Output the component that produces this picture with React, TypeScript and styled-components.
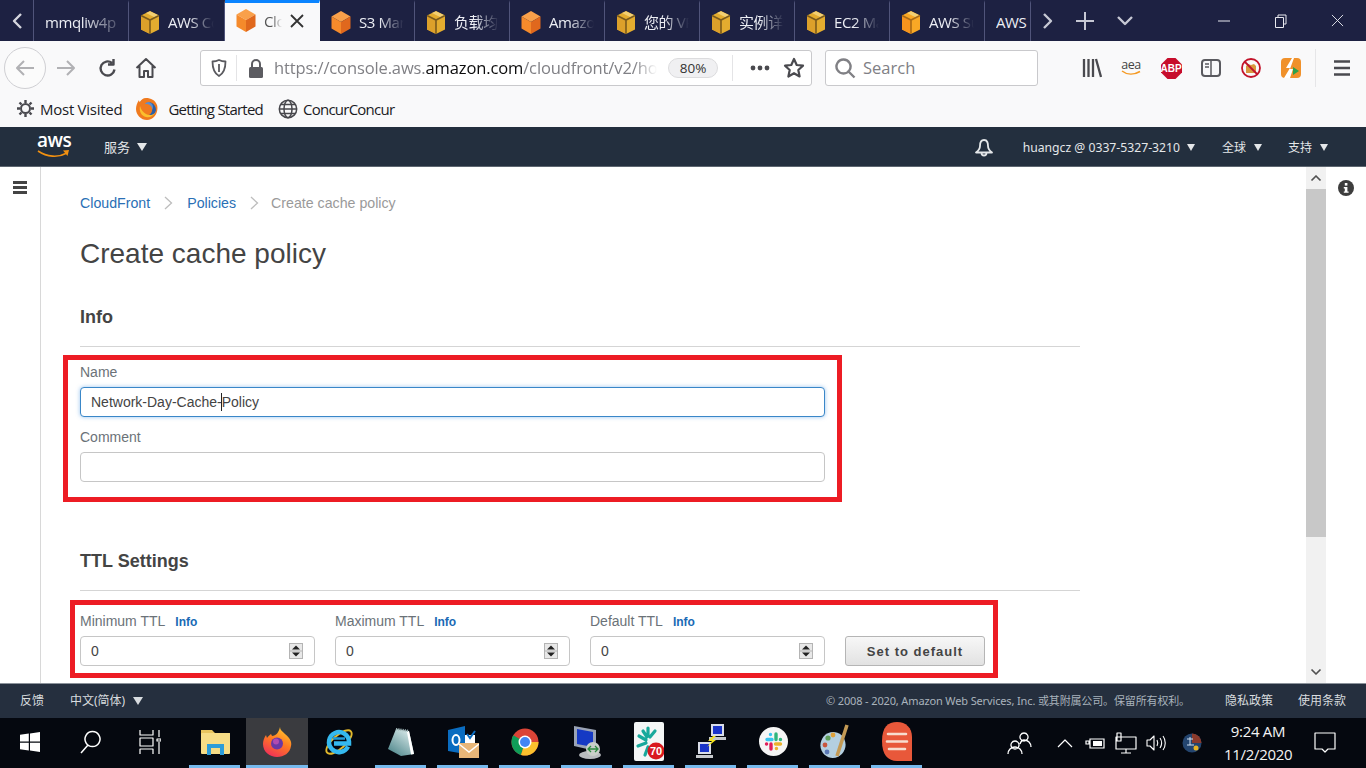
import React from "react";
import styled, { createGlobalStyle } from "styled-components";

const Global = createGlobalStyle`
  html, body { margin: 0; padding: 0; background: #fff; overflow: hidden; }
  * { box-sizing: border-box; }
`;
const UI = `"Open Sans", "Noto Sans CJK SC", sans-serif`;
const WEB = `"Liberation Sans", "Noto Sans CJK SC", sans-serif`;
const CJK = `"Noto Sans", "Noto Sans CJK SC", sans-serif`;

const Page = styled.div`
  width: 1366px; height: 768px; display: flex; flex-direction: column; overflow: hidden;
  font-family: ${WEB};
`;

/* ---------- browser tab strip ---------- */
const TabStrip = styled.div`
  height: 41px; flex: none; display: flex; align-items: stretch; background: #1d2142; color: #f2f2f6;
`;
const StripButton = styled.div<{ $w: number; $line?: boolean }>`
  width: ${p => p.$w}px; flex: none; display: flex; align-items: center; justify-content: center;
  ${p => p.$line ? "border-right: 1px solid #50547a;" : ""}
`;
const Tab = styled.div<{ $active?: boolean; $w?: number; $solo?: boolean }>`
  width: ${p => p.$w ?? 95}px; flex: none; display: flex; align-items: center; gap: 8px;
  padding-left: 11px; padding-right: ${p => p.$solo ? 0 : p.$active ? 15 : 10}px; position: relative;
  font: 15px/20px ${UI}; letter-spacing: -0.4px;
  background: ${p => p.$active ? "#f9f9fa" : "transparent"};
  color: ${p => p.$active ? "#555" : "#eceef4"};
  border-right: 1px solid ${p => p.$active ? "#f9f9fa" : "#50547a"};
  border-top: 3px solid ${p => p.$active ? "#0a84ff" : "transparent"};
  padding-bottom: ${p => p.$active ? 3 : 0}px;
`;
const TabText = styled.span<{ $fade?: boolean }>`
  flex: 1; min-width: 0; overflow: hidden; white-space: nowrap;
  ${p => p.$fade === false ? "" : "mask-image: linear-gradient(90deg, #000 45%, transparent 100%);"}
`;
const WindowControls = styled.div`
  margin-left: auto; display: flex;
`;
const WindowButton = styled.div`
  width: 57px; display: flex; align-items: center; justify-content: center;
`;

/* ---------- browser toolbar ---------- */
const Toolbar = styled.div`
  height: 49px; flex: none; display: flex; align-items: center; background: #f9f9fa; padding-left: 4px; padding-top: 5px;
`;
const BackCircle = styled.div`
  width: 42px; height: 42px; flex: none; border: 1px solid #cfcfd3; border-radius: 50%;
  display: flex; align-items: center; justify-content: center; background: #fbfbfb;
`;
const ToolSlot = styled.div<{ $ml?: number }>`
  width: 40px; height: 36px; flex: none; display: flex; align-items: center; justify-content: center;
  margin-left: ${p => p.$ml ?? 0}px;
`;
const UrlBar = styled.div`
  width: 612px; height: 36px; flex: none; margin-left: 34px; display: flex; align-items: center;
  background: #fff; border: 1px solid #c9c9cc; border-radius: 3px;
`;
const ShieldSlot = styled.div`
  width: 36px; height: 26px; flex: none; display: flex; align-items: center; justify-content: center;
  border-right: 1px solid #e4e4e6;
`;
const LockSlot = styled.div`
  width: 37px; flex: none; display: flex; align-items: center; justify-content: center;
`;
const UrlText = styled.div`
  width: 383px; flex: none; overflow: hidden; white-space: nowrap; font: 16.5px/22px ${UI}; color: #808085;
  letter-spacing: -0.12px;
  mask-image: linear-gradient(90deg, #000 94%, transparent 100%);
  b { font-weight: 400; color: #0c0c0d; }
`;
const ZoomPill = styled.div`
  width: 50px; height: 20px; margin-left: 11px; flex: none; border: 1px solid #dcdcde; border-radius: 10px;
  background: #f0f0f2; font: 13.5px/18px ${UI}; color: #333; text-align: center;
`;
const UrlDivider = styled.div`
  width: 1px; height: 26px; background: #e4e4e6; margin-left: 14px; flex: none;
`;
const UrlAction = styled.div<{ $ml: number }>`
  width: 24px; flex: none; margin-left: ${p => p.$ml}px; display: flex; align-items: center; justify-content: center;
`;
const SearchBox = styled.div`
  width: 213px; height: 36px; flex: none; margin-left: 13px; display: flex; align-items: center; gap: 7px;
  padding-left: 9px; background: #fff; border: 1px solid #c9c9cc; border-radius: 3px;
  font: 16.5px/22px ${UI}; color: #808085;
`;
const ToolDivider = styled.div`
  width: 1px; height: 38px; background: #e6e6e8; margin-left: 4px; flex: none;
`;

/* ---------- bookmarks ---------- */
const Bookmarks = styled.div`
  height: 37px; flex: none; display: flex; align-items: center; background: #f9f9fa; padding: 0 0 0 17px;
`;
const Bookmark = styled.div<{ $gap: number; $ml?: number; $track: number }>`
  display: flex; align-items: center; gap: ${p => p.$gap}px; margin-left: ${p => p.$ml ?? 0}px;
  font: 15px/20px ${UI}; color: #1b1b1f; letter-spacing: ${p => p.$track}px;
`;

/* ---------- AWS nav ---------- */
const Nav = styled.div`
  height: 40px; flex: none; display: flex; align-items: center; background: #232f3e; border-bottom: 1px solid #5d6670;
  color: #e4e7e9; font: 13px/18px ${CJK}; padding: 0 0 0 37px;
`;
const LogoWrap = styled.div`
  width: 33px; height: 24px; position: relative; flex: none; margin-right: 34px;
  font: 600 19px/18px ${UI}; color: #fff; letter-spacing: -0.5px;
`;
const LogoText = styled.span`
  display: block; margin-top: -4px; text-align: center;
`;
const LogoSmile = styled.svg`
  position: absolute; left: 0; bottom: 0;
`;
const NavItem = styled.div<{ $ml?: number; $size?: number; $gap?: number }>`
  display: flex; align-items: center; gap: ${p => p.$gap ?? 7}px; margin-left: ${p => p.$ml ?? 0}px;
  ${p => p.$size ? `font-size: ${p.$size}px;` : ""}
`;
const Caret = styled.span<{ $w?: number }>`
  width: 0; height: 0; flex: none;
  border-left: ${p => (p.$w ?? 10) / 2}px solid transparent; border-right: ${p => (p.$w ?? 10) / 2}px solid transparent;
  border-top: ${p => Math.round((p.$w ?? 10) * 0.75)}px solid currentColor;
`;
const NavRight = styled.div`
  margin-left: auto; display: flex; align-items: center; padding: 2px 38px 0 0;
`;

/* ---------- console body ---------- */
const Body = styled.div`
  flex: 1; min-height: 0; display: flex; background: #fff;
`;
const SideRail = styled.div`
  width: 41px; flex: none; border-right: 1px solid #d8d8d8; padding: 14px 0 0 13px;
`;
const RailBar = styled.i`
  display: block; width: 14px; height: 3px; background: #444; margin-bottom: 2px;
`;
const Main = styled.div`
  width: 1265px; flex: none; padding: 26px 0 0 39px; overflow: hidden;
`;
const Crumbs = styled.div`
  display: flex; align-items: center; font-size: 14.2px; line-height: 20px; color: #9a9a9a;
`;
const CrumbLink = styled.span`
  color: #2a6fb5;
`;
const CrumbSep = styled.svg<{ $ml: number; $mr: number }>`
  margin: 0 ${p => p.$mr}px 0 ${p => p.$ml}px; flex: none;
`;
const Title = styled.h1`
  margin: 21px 0 0; font-size: 28px; line-height: 40px; font-weight: 400; color: #444;
`;
const SectionTitle = styled.h2<{ $mt: number }>`
  margin: ${p => p.$mt}px 0 0; font-size: 18px; line-height: 24px; font-weight: 700; color: #444;
  padding-bottom: 17px; border-bottom: 1px solid #d5d5d5; width: 1000px;
`;
const NameBox = styled.div`
  width: 779px; height: 147px; margin: 8px 0 0 -17px; border: 5px solid #ed1c24; padding: 2px 12px 0;
`;
const TtlBox = styled.div`
  width: 928px; height: 78px; margin: 9px 0 0 -10px; border: 5px solid #ed1c24; padding: 5px 8px 7px 5px;
  display: flex; align-items: flex-end; gap: 20px;
`;
const FieldLabel = styled.label`
  display: block; font-size: 14px; line-height: 20px; color: #6b7278;
`;
const CommentLabel = styled(FieldLabel)`
  margin-top: 10px;
`;
const InfoLink = styled.span`
  font-size: 12px; font-weight: 700; color: #1a6ab5; margin-left: 10px;
`;
const FieldWrap = styled.div<{ $mt?: number }>`
  position: relative; margin-top: ${p => p.$mt ?? 5}px;
`;
const TextField = styled.input<{ $focus?: boolean }>`
  display: block; width: 100%; height: 30px; padding: 0 10px; font: 14px ${WEB}; color: #444;
  background: #fff; border-radius: 4px; outline: none;
  border: 1px solid ${p => p.$focus ? "#3a87c8" : "#c6c6c6"};
  ${p => p.$focus ? "box-shadow: 0 0 4px rgba(70,150,225,.55);" : ""}
`;
const TextCaret = styled.i`
  position: absolute; left: 141px; top: 6px; width: 1px; height: 18px; background: #222;
`;
const Spinner = styled.svg`
  position: absolute; right: 12px; top: 7px;
`;
const TtlField = styled.div`
  width: 235px; flex: none;
`;
const DefaultButton = styled.button`
  width: 140px; height: 30px; flex: none; border: 1px solid #b5b5b5; border-radius: 3px;
  background: linear-gradient(#f7f7f7, #e2e2e2); color: #444; font: 700 13px ${WEB}; letter-spacing: 1px; padding: 0;
`;
const Scrollbar = styled.div`
  width: 20px; flex: none; background: #f1f1f1; display: flex; flex-direction: column; align-items: center;
`;
const ScrollArrow = styled.div`
  height: 22px; flex: none; width: 100%; display: flex; align-items: center; justify-content: center;
`;
const ScrollThumb = styled.div`
  width: 100%; height: 348px; flex: none; background: #c8c8c8;
`;
const ScrollTrack = styled.div`
  flex: 1;
`;
const HelpRail = styled.div`
  flex: 1; padding: 13px 0 0 12px;
`;

/* ---------- footer ---------- */
const Footer = styled.div`
  height: 35px; flex: none; display: flex; align-items: center; background: #252f3e; border-top: 1px solid #8b929a;
  color: #d8dcdf; font: 12px/16px ${CJK}; padding: 0 20px;
`;
const FooterNote = styled.span`
  margin-left: auto; color: #a9b3bc; font-size: 11px; letter-spacing: -0.14px;
`;
const FooterLink = styled.span<{ $ml: number }>`
  margin-left: ${p => p.$ml}px; display: flex; align-items: center; gap: 8px;
`;

/* ---------- taskbar ---------- */
const Taskbar = styled.div`
  height: 50px; flex: none; display: flex; background: #05080f; color: #fff;
`;
const TaskSlot = styled.div`
  width: 60px; flex: none; display: flex; align-items: center; justify-content: center; padding-bottom: 2px;
`;
const AppList = styled.div`
  display: flex; margin-left: 4px;
`;
const AppSlot = styled.div<{ $active?: boolean; $open?: boolean }>`
  width: 62px; flex: none; display: flex; align-items: center; justify-content: center; position: relative; padding-bottom: 3px;
  background: ${p => p.$active ? "#3a3b3f" : "transparent"};
  &::after {
    content: ""; position: absolute; bottom: 0; height: 3px; background: #76b9ed;
    left: ${p => p.$active ? 0 : 5}px; right: ${p => p.$active ? 0 : 6}px;
    display: ${p => p.$open ? "block" : "none"};
  }
`;
const Tray = styled.div`
  margin-left: auto; display: flex; padding-right: 21px;
`;
const TraySlot = styled.div<{ $w: number; $ml?: number }>`
  width: ${p => p.$w}px; margin-left: ${p => p.$ml ?? 0}px; flex: none; display: flex; align-items: center; justify-content: center;
`;
const Clock = styled.div`
  width: 68px; margin-left: 17px; flex: none; text-align: center; font: 15px/23px ${UI}; letter-spacing: -0.3px; padding-top: 2px; color: #f4f4f4;
`;

/* ---------- drawn icons ---------- */
const Cube = ({ kind = "gold", size = 20 }: { kind?: "gold" | "orange" | "amber"; size?: number }) => {
  if (kind === "orange") return (
    <svg width={size} height={size * 1.15} viewBox="0 0 20 23" style={{ flex: "none" }}>
      <path d="M10 0 19.500 5.500 10 11 .5 5.500z" fill="#f9a04a" />
      <path d="M.5 5.500 10 11v12L.5 17.500z" fill="#f58a2b" />
      <path d="M19.500 5.500 10 11v12l9.500-5.500z" fill="#e0681d" />
    </svg>
  );
  const c = kind === "amber" ? ["#f9a825", "#f7941d", "#a86a17"] : ["#e3ac2f", "#dca02a", "#7a5a1c"];
  return (
    <svg width={size} height={size * 1.15} viewBox="0 0 20 23" style={{ flex: "none" }}>
      <path d="M10 0 19 4.500v14L10 23 1 18.500v-14z" fill={c[0]} />
      <path d="M1 4.500 10 9v14L1 18.500z" fill={c[1]} />
      <path d="M10 .2 19 4.500 15 6.500 6 2z" fill="#f2cf72" />
      <path d="M1 4.500 10 9l9-4.500M10 9v14" fill="none" stroke={c[2]} strokeWidth="1.600" />
    </svg>
  );
};
const Firefox = () => (
  <svg width="30" height="30" viewBox="0 0 30 30" style={{ flex: "none" }}>
    <defs>
      <linearGradient id="ffg" x1="0.7" y1="0" x2="0.2" y2="1">
        <stop offset="0" stopColor="#ffc62e" /><stop offset=".45" stopColor="#ff7a22" /><stop offset="1" stopColor="#ee2a5c" />
      </linearGradient>
    </defs>
    <path d="M18 0c0 3 2 4 5 7 5 4 7 8 6 12-1 7-7 11-14 11S1 25 1 17c0-3 1-6 3-9l1 3c1-2 3-3 4-4l1 2c4 0 7-4 8-9z" fill="url(#ffg)" />
    <circle cx="15" cy="16.500" r="6" fill="#6a38a6" />
    <circle cx="14" cy="14.500" r="3" fill="#b14bb0" />
  </svg>
);
const OldFirefox = () => (
  <svg width="22" height="23" viewBox="0 0 22 23" style={{ flex: "none" }}>
    <circle cx="11" cy="11.500" r="9.500" fill="#2a5fa8" />
    <circle cx="12" cy="10" r="5" fill="#5b8fd0" />
    <path d="M3 3c0 1 .5 2 1 2 1-2 3-4 6-4 5 0 9 2 11 7 2 7-3 15-10 15C5 23 0 18 0 12c0-3 1-6 3-9z M16 6c-3-2-6-1-7 1 3-.5 6 1 7 4 1 4-2 8-6 8 3 1 9 0 10-6 0-3-2-6-4-7z" fill="#f07a1e" fillRule="evenodd" />
    <path d="M4 9c-1 5 1 10 6 11 4 1 7-1 9-4-2 2-6 3-9 1-3-2-5-4-6-8z" fill="#fbbf2d" />
  </svg>
);
const CloseX = ({ size = 14, color = "#333", w = 1.800 }: { size?: number; color?: string; w?: number }) => (
  <svg width={size} height={size} viewBox="0 0 14 14" style={{ flex: "none" }}><path d="M1 1l12 12M13 1 1 13" stroke={color} strokeWidth={w} /></svg>
);
const Stroke = ({ w, h, d, color = "#4a4a4f", sw = 2, fill = "none" }: { w: number; h: number; d: string; color?: string; sw?: number; fill?: string }) => (
  <svg width={w} height={h} viewBox={`0 0 ${w} ${h}`} style={{ flex: "none" }}>
    <path d={d} fill={fill} stroke={color} strokeWidth={sw} strokeLinejoin="round" />
  </svg>
);
const Gear = () => (
  <svg width="17" height="17" viewBox="0 0 17 17" style={{ flex: "none" }}>
    <circle cx="8.500" cy="8.500" r="4.500" fill="none" stroke="#4a4a4f" strokeWidth="2" />
    <path d="M8.500 0v3M8.500 14v3M0 8.500h3M14 8.500h3M2.500 2.500l2 2M12.500 12.500l2 2M14.500 2.500l-2 2M4.500 12.500l-2 2" stroke="#4a4a4f" strokeWidth="2.400" />
  </svg>
);
const Globe = () => (
  <svg width="20" height="20" viewBox="0 0 20 20" style={{ flex: "none" }}>
    <g fill="none" stroke="#47474c" strokeWidth="1.500">
      <circle cx="10" cy="10" r="8.700" /><ellipse cx="10" cy="10" rx="4" ry="8.700" /><path d="M1.500 10h17M2.800 5.500h14.400M2.800 14.500h14.400" />
    </g>
  </svg>
);
const SpinIcon = () => (
  <Spinner width="14" height="16" viewBox="0 0 14 16">
    <rect x=".5" y=".5" width="13" height="15" fill="#e8e8e8" stroke="#b4b4b4" />
    <path d="M.5 8h13" stroke="#b4b4b4" />
    <path d="M3 6.500 7 2.500l4 4zM3 9.500l4 4 4-4z" fill="#222" />
  </Spinner>
);
const Hamburger = () => (
  <svg width="20" height="18" viewBox="0 0 20 18"><path d="M2 2.500h16M2 9h16M2 15.500h16" stroke="#4a4a4f" strokeWidth="2.400" /></svg>
);
const Windows = () => (
  <svg width="20" height="20" viewBox="0 0 20 20"><path d="M0 2.800 8.800 1.600V9.500H0zM10 1.400 20 0v9.500H10zM0 10.700h8.800v7.800L0 17.300zM10 10.700h10V20l-10-1.400z" fill="#fff" /></svg>
);
const InternetExplorer = () => (
  <svg width="30" height="32" viewBox="0 0 30 32">
    <ellipse cx="15" cy="16" rx="16" ry="6.500" transform="rotate(-42 15 16)" fill="none" stroke="#e4ba2c" strokeWidth="1.900" />
    <path d="M24 20.500a10 10 0 1 1 1-5v2H10" fill="none" stroke="#35b9ee" strokeWidth="4.500" />
    <path d="M9 12.500h12" stroke="#1f9bd8" strokeWidth="2.500" />
  </svg>
);
const Chrome = () => (
  <svg width="28" height="28" viewBox="0 0 28 28">
    <circle cx="14" cy="14" r="13.500" fill="#db4437" />
    <path d="M14 14 2.300 7.300A13.500 13.500 0 0 0 10 27z" fill="#0f9d58" />
    <path d="M14 14h13.500A13.500 13.500 0 0 1 10 27z" fill="#fbc02d" />
    <circle cx="14" cy="14" r="6.500" fill="#fff" /><circle cx="14" cy="14" r="5" fill="#4285f4" />
  </svg>
);
const Slack = () => (
  <svg width="29" height="29" viewBox="0 0 29 29">
    <circle cx="14.500" cy="14.500" r="14.500" fill="#f5f5f5" />
    <g strokeWidth="3.400" strokeLinecap="round" fill="none">
      <path d="M8 12.500h5M11.500 7.500h0" stroke="#36c5f0" /><path d="M17 7v5.500M21.500 12.500h-.1" stroke="#2eb67d" />
      <path d="M16.500 17h5M17.500 21.500h-.1" stroke="#ecb22e" /><path d="M12 17v5M7.500 17h.1" stroke="#e01e5a" />
    </g>
  </svg>
);
const Outlook = () => (
  <svg width="32" height="32" viewBox="0 0 32 32">
    <path d="M1 4 18 0v28L1 25z" fill="#0a6cc0" />
    <ellipse cx="9" cy="14" rx="3.500" ry="5" fill="none" stroke="#fff" strokeWidth="2" />
    <path d="M18 9h10v9H18z" fill="#fff" />
    <path d="m20 8 3 4 5-7" fill="none" stroke="#0a6cc0" strokeWidth="2" />
    <rect x="12" y="17" width="20" height="15" fill="#e8b678" />
    <path d="m12 18 10 8 10-8" fill="none" stroke="#fff" strokeWidth="1.400" />
  </svg>
);
const Notepad = () => (
  <svg width="28" height="28" viewBox="0 0 28 28">
    <defs>
      <linearGradient id="npg" x1="0.8" y1="0" x2="0.1" y2="1">
        <stop offset="0" stopColor="#dcecec" /><stop offset="1" stopColor="#4a8388" />
      </linearGradient>
    </defs>
    <path d="M9 1 22 3l5 23-13 2L1 21z" fill="url(#npg)" />
    <path d="M22 3l5 23-3 .5L20 4z" fill="#fff" />
    <path d="M9 1 22 3" stroke="#9db3b5" strokeWidth="2.400" strokeDasharray="1.200 1" />
  </svg>
);
const RemoteDesktop = () => (
  <svg width="30" height="34" viewBox="0 0 30 34">
    <path d="M2 1 24 5v21L2 21z" fill="#9aa3b5" />
    <path d="M5 4 21 7v15L5 19z" fill="#1539c4" />
    <ellipse cx="18" cy="30" rx="11" ry="4" fill="#b9bcbf" />
    <circle cx="21" cy="24" r="7" fill="#c9cfc9" />
    <path d="M17 24h8M19 21l-3 3 3 3M23 21l3 3-3 3" stroke="#2b8a3e" fill="none" strokeWidth="1.300" />
  </svg>
);
const TaskBadge = styled.span`
  position: absolute; left: 14px; top: 22px; width: 16px; text-align: center; font: 700 11px/14px "Liberation Sans", sans-serif; color: #fff;
`;
const GreenFrame = styled.div`
  position: relative; width: 30px; height: 39px;
`;
const GreenApp = () => (
  <GreenFrame>
    <svg width="30" height="39" viewBox="0 0 30 39">
      <rect width="30" height="39" rx="2" fill="#f4f6f6" />
      <g stroke="#18a99c" strokeWidth="3.200" strokeLinecap="round">
        <path d="M14 6v8M21 9l-5 6M5 14l7 4M4 24l8-3M11 33l3-8M9 9l4 6" />
      </g>
      <circle cx="22" cy="29" r="8.500" fill="#d9181f" />
    </svg>
    <TaskBadge>70</TaskBadge>
  </GreenFrame>
);
const NetworkPcs = () => (
  <svg width="30" height="37" viewBox="0 0 30 37">
    <rect x="15" y="1" width="13" height="12" fill="#d9dde8" /><rect x="17" y="3" width="9" height="8" fill="#1a34c8" />
    <path d="M13 14h17v3H13z" fill="#c5c8cc" />
    <rect x="2" y="19" width="13" height="12" fill="#d9dde8" /><rect x="4" y="21" width="9" height="8" fill="#1a34c8" />
    <path d="M0 32h17v3H0z" fill="#c5c8cc" />
    <path d="m17 13-5 5 4 0-5 6 9-7-4 0 4-4z" fill="#f4e31c" />
  </svg>
);
const Palette = () => (
  <svg width="30" height="36" viewBox="0 0 30 36">
    <ellipse cx="13" cy="21" rx="12.500" ry="13" fill="#b4cfe0" transform="rotate(20 13 21)" />
    <circle cx="8" cy="14" r="2.600" fill="#5f9e5a" /><circle cx="13" cy="11" r="2.400" fill="#dfa13a" />
    <circle cx="5" cy="21" r="2.400" fill="#c8553d" /><circle cx="7" cy="28" r="2.400" fill="#5a77b5" />
    <path d="M27 1 17 32" stroke="#c49a55" strokeWidth="3.500" />
  </svg>
);
const OrangeBubble = () => (
  <svg width="30" height="39" viewBox="0 0 30 39">
    <path d="M15 0c9 0 15 6 15 15v24H15C6 39 0 33 0 19S6 0 15 0z" fill="#e8583a" />
    <path d="M6 12h18M5 19.500h20M7 27h16" stroke="#f7ddcf" strokeWidth="2.600" strokeLinecap="round" />
  </svg>
);
const Explorer = () => (
  <svg width="29" height="26" viewBox="0 0 29 26">
    <path d="M0 1h11l3 3h15v4H0z" fill="#e8c45e" />
    <rect y="4" width="29" height="21" rx="1" fill="#f6dc86" />
    <path d="M6 15h17v11h-4v-7h-9v7H6z" fill="#2c9cd9" />
  </svg>
);
const AeaWrap = styled.div`
  display: flex; flex-direction: column; align-items: center; font: 12.5px/11px ${UI}; color: #444; letter-spacing: -0.4px;
`;
const AmazonAssist = () => (
  <AeaWrap>aea
    <svg width="20" height="7" viewBox="0 0 20 7"><path d="M1 1c5 4 12 4 18 .5" stroke="#f59a23" strokeWidth="1.500" fill="none" /></svg>
  </AeaWrap>
);
const AbpWrap = styled.div`
  position: relative; width: 21px; height: 21px;
`;
const AbpText = styled.span`
  position: absolute; inset: 0; text-align: center; font: 700 10px/21px "Liberation Sans", sans-serif; color: #fff;
`;
const Abp = () => (
  <AbpWrap>
    <svg width="21" height="21" viewBox="0 0 21 21"><path d="M6.500 0h8L21 6.500v8L14.500 21h-8L0 14.500v-8z" fill="#c70d2c" /></svg>
    <AbpText>ABP</AbpText>
  </AbpWrap>
);
const SidebarIcon = () => (
  <svg width="20" height="18" viewBox="0 0 20 18">
    <rect x="1" y="1" width="18" height="16" rx="3" fill="none" stroke="#5a5a5f" strokeWidth="2" />
    <path d="M10 1v16" stroke="#5a5a5f" strokeWidth="1.500" /><path d="M4 5h4M4 8h4" stroke="#5a5a5f" strokeWidth="1.300" />
  </svg>
);
const NoSign = () => (
  <svg width="20" height="20" viewBox="0 0 20 20">
    <path d="M5 8l2-2 3 1 3-1 2 2v7H5z" fill="#d9973f" />
    <circle cx="10" cy="10" r="9" fill="none" stroke="#c2132a" strokeWidth="1.800" />
    <path d="m3.500 3.500 13 13" stroke="#c2132a" strokeWidth="1.800" />
  </svg>
);
const BoltApp = () => (
  <svg width="20" height="20" viewBox="0 0 20 20">
    <rect width="20" height="20" rx="4" fill="#f0912a" />
    <path d="M11 0 5 10h4L3 20h6l3-9H9l4-11z" fill="#fff" />
    <path d="M12 9l6 4-6 4z" fill="#2ba24c" />
  </svg>
);
const ImeBall = () => (
  <svg width="20" height="20" viewBox="0 0 20 20">
    <circle cx="10" cy="10" r="9.500" fill="#24456f" />
    <path d="M10 .5A9.500 9.500 0 0 1 19.500 10H10z" fill="#8a3a2c" />
    <path d="M5 6h6M8 4v8M5 12h7" stroke="#cfe0f2" strokeWidth="1" />
    <circle cx="14" cy="15" r="2.500" fill="#e8b422" />
  </svg>
);

const TABS: { label: string; cube?: "gold" | "orange" | "amber" }[] = [
  { label: "AWS Console", cube: "gold" },
  { label: "CloudFront", cube: "orange" },
  { label: "S3 Management", cube: "orange" },
  { label: "负载均衡器", cube: "gold" },
  { label: "Amazon", cube: "orange" },
  { label: "您的 VPC", cube: "gold" },
  { label: "实例详情", cube: "gold" },
  { label: "EC2 Management", cube: "gold" },
  { label: "AWS Support", cube: "amber" },
];

const TtlInput = ({ label }: { label: string }) => (
  <TtlField>
    <FieldLabel>{label}<InfoLink>Info</InfoLink></FieldLabel>
    <FieldWrap $mt={4}>
      <TextField readOnly value="0" />
      <SpinIcon />
    </FieldWrap>
  </TtlField>
);

const APPS: { icon: React.ReactNode; active?: boolean; open?: boolean }[] = [
  { icon: <Explorer />, open: true },
  { icon: <Firefox />, active: true, open: true },
  { icon: <InternetExplorer /> },
  { icon: <Notepad />, open: true },
  { icon: <Outlook />, open: true },
  { icon: <Chrome />, open: true },
  { icon: <RemoteDesktop />, open: true },
  { icon: <GreenApp />, open: true },
  { icon: <NetworkPcs />, open: true },
  { icon: <Slack />, open: true },
  { icon: <Palette />, open: true },
  { icon: <OrangeBubble />, open: true },
];

export default function App() {
  return (
    <Page>
      <Global />
      <TabStrip>
        <StripButton $w={34} $line>
          <Stroke w={12} h={18} d="M10 2 3 9l7 7" color="#d5d6de" sw={2.400} />
        </StripButton>
        <Tab $solo><TabText>mmqliw4p</TabText></Tab>
        {TABS.map((t, i) => (
          <Tab key={t.label} $active={i === 1} $w={i === 0 ? 96 : undefined}>
            <Cube kind={t.cube} />
            <TabText>{t.label}</TabText>
            {i === 1 && <CloseX />}
          </Tab>
        ))}
        <Tab $w={46} $solo><TabText $fade={false}>AWS</TabText></Tab>
        <StripButton $w={34}>
          <Stroke w={12} h={18} d="M2 2l7 7-7 7" color="#c6c8d4" sw={2.400} />
        </StripButton>
        <StripButton $w={40}>
          <Stroke w={18} h={18} d="M9 0v18M0 9h18" color="#c6c8d4" sw={2} />
        </StripButton>
        <StripButton $w={40}>
          <Stroke w={16} h={10} d="M1 1l7 7 7-7" color="#c6c8d4" sw={2.400} />
        </StripButton>
        <WindowControls>
          <WindowButton><Stroke w={12} h={2} d="M0 1h12" color="#e8e9ef" sw={1} /></WindowButton>
          <WindowButton><Stroke w={12} h={14} d="M3 3V1h8v9H8.500M.5 3.500h8v10h-8z" color="#e8e9ef" sw={1} /></WindowButton>
          <WindowButton><CloseX size={13} color="#e8e9ef" w={1} /></WindowButton>
        </WindowControls>
      </TabStrip>

      <Toolbar>
        <BackCircle><Stroke w={20} h={18} d="M19 9H2M9 2 2 9l7 7" color="#b1b1b4" sw={2} /></BackCircle>
        <ToolSlot><Stroke w={20} h={18} d="M1 9h17M11 2l7 7-7 7" color="#b1b1b4" sw={2} /></ToolSlot>
        <ToolSlot><Stroke w={20} h={20} d="M18.500 11.500A7 7 0 1 1 16 5M17.500 1v5.500H12" color="#4a4a4f" sw={2.400} /></ToolSlot>
        <ToolSlot><Stroke w={22} h={22} d="M1.500 11 11 2l9.500 9M4.500 9v11h4.500v-6h4v6h4.500V9" color="#4a4a4f" sw={2} /></ToolSlot>
        <UrlBar>
          <ShieldSlot><Stroke w={16} h={18} d="M8 1c2 1 4 1.500 6.500 1.500 0 7-2 12-6.500 14.500C3.500 14.500 1.500 9.500 1.500 2.500 4 2.500 6 2 8 1zM8 5v8" color="#5a5a5f" sw={1.800} /></ShieldSlot>
          <LockSlot>
            <svg width="14" height="19" viewBox="0 0 14 19"><rect y="8" width="14" height="11" rx="1.500" fill="#5c5c61" /><path d="M3 8V5a4 4 0 0 1 8 0v3" fill="none" stroke="#5c5c61" strokeWidth="2" /></svg>
          </LockSlot>
          <UrlText>https://console.aws.<b>amazon.com</b>/cloudfront/v2/home?region=us-east-1</UrlText>
          <ZoomPill>80%</ZoomPill>
          <UrlDivider />
          <UrlAction $ml={15}>
            <svg width="20" height="6" viewBox="0 0 20 6"><g fill="#4a4a4f"><circle cx="3" cy="3" r="2.400" /><circle cx="10" cy="3" r="2.400" /><circle cx="17" cy="3" r="2.400" /></g></svg>
          </UrlAction>
          <UrlAction $ml={10}>
            <Stroke w={22} h={22} d="M11 2l2.700 6 6.300.7-4.700 4.300 1.300 6.500L11 16.200 5.400 19.500 6.700 13 2 8.700 8.300 8z" color="#4a4a4f" sw={2.200} />
          </UrlAction>
        </UrlBar>
        <SearchBox>
          <Stroke w={21} h={21} d="M8.500 1.500a7 7 0 1 0 .01 0zM13.500 13.500l6 6" color="#808085" sw={2.400} />
          Search
        </SearchBox>
        <ToolSlot $ml={34}><Stroke w={20} h={20} d="M2 1v18M6.500 1v18M11 1v18M14 1l5 18" color="#4a4a4f" sw={2.300} /></ToolSlot>
        <ToolSlot $ml={-1}><AmazonAssist /></ToolSlot>
        <ToolSlot><Abp /></ToolSlot>
        <ToolSlot><SidebarIcon /></ToolSlot>
        <ToolSlot><NoSign /></ToolSlot>
        <ToolSlot><BoltApp /></ToolSlot>
        <ToolDivider />
        <ToolSlot $ml={6}><Hamburger /></ToolSlot>
      </Toolbar>

      <Bookmarks>
        <Bookmark $gap={6} $track={-0.26}><Gear />Most Visited</Bookmark>
        <Bookmark $gap={10} $ml={14} $track={-0.76}><OldFirefox />Getting Started</Bookmark>
        <Bookmark $gap={5} $ml={15} $track={-0.76}><Globe />ConcurConcur</Bookmark>
      </Bookmarks>

      <Nav>
        <LogoWrap>
          <LogoText>aws</LogoText>
          <LogoSmile width="33" height="10" viewBox="0 0 33 10">
            <path d="M1 2c9 6 20 7 29 2" fill="none" stroke="#f29111" strokeWidth="1.600" />
            <path d="M26 1.500 32 1l-1.500 6z" fill="#f29111" />
          </LogoSmile>
        </LogoWrap>
        <NavItem>服务<Caret $w={11} /></NavItem>
        <NavRight>
          <Stroke w={20} h={20} d="M10 2C6.500 2 6 5 6 8c0 2.500-2 5-4 6.500h16c-2-1.500-4-4-4-6.500 0-3-.5-6-4-6zM7.500 15a2.500 2.500 0 0 0 5 0" color="#e4e7e9" sw={1.800} />
          <NavItem $ml={29} $size={12.200}>huangcz @ 0337-5327-3210<Caret $w={9} /></NavItem>
          <NavItem $ml={27} $size={12} $gap={8}>全球<Caret $w={9} /></NavItem>
          <NavItem $ml={26} $size={12} $gap={8}>支持<Caret $w={9} /></NavItem>
        </NavRight>
      </Nav>

      <Body>
        <SideRail><RailBar /><RailBar /><RailBar /></SideRail>
        <Main>
          <Crumbs>
            <CrumbLink>CloudFront</CrumbLink>
            <CrumbSep $ml={14} $mr={14} width="9" height="14" viewBox="0 0 9 14"><path d="m1 1 6.500 6L1 13" fill="none" stroke="#bdbdbd" strokeWidth="1.300" /></CrumbSep>
            <CrumbLink>Policies</CrumbLink>
            <CrumbSep $ml={14} $mr={12} width="9" height="14" viewBox="0 0 9 14"><path d="m1 1 6.500 6L1 13" fill="none" stroke="#bdbdbd" strokeWidth="1.300" /></CrumbSep>
            Create cache policy
          </Crumbs>
          <Title>Create cache policy</Title>
          <SectionTitle $mt={31}>Info</SectionTitle>
          <NameBox>
            <FieldLabel>Name</FieldLabel>
            <FieldWrap>
              <TextField $focus readOnly value="Network-Day-Cache-Policy" />
              <TextCaret />
            </FieldWrap>
            <CommentLabel>Comment</CommentLabel>
            <FieldWrap><TextField readOnly value="" /></FieldWrap>
          </NameBox>
          <SectionTitle $mt={47}>TTL Settings</SectionTitle>
          <TtlBox>
            <TtlInput label="Minimum TTL" />
            <TtlInput label="Maximum TTL" />
            <TtlInput label="Default TTL" />
            <DefaultButton>Set to default</DefaultButton>
          </TtlBox>
        </Main>
        <Scrollbar>
          <ScrollArrow><Stroke w={12} h={8} d="M1.500 6.500 6 2l4.500 4.500" color="#505050" sw={1.700} /></ScrollArrow>
          <ScrollThumb />
          <ScrollTrack />
          <ScrollArrow><Stroke w={12} h={8} d="M1.500 1.500 6 6l4.500-4.500" color="#505050" sw={1.700} /></ScrollArrow>
        </Scrollbar>
        <HelpRail>
          <svg width="16" height="16" viewBox="0 0 16 16">
            <circle cx="8" cy="8" r="8" fill="#3d3d3d" />
            <rect x="6.800" y="3" width="2.600" height="2.600" fill="#fff" />
            <path d="M5.800 7h3.600v4.400h1.200v1.400H5.800v-1.400h1V8.400h-1z" fill="#fff" />
          </svg>
        </HelpRail>
      </Body>

      <Footer>
        <FooterLink $ml={0}>反馈</FooterLink>
        <FooterLink $ml={26}>中文(简体)<Caret $w={10} /></FooterLink>
        <FooterNote>© 2008 - 2020, Amazon Web Services, Inc. 或其附属公司。保留所有权利。</FooterNote>
        <FooterLink $ml={35}>隐私政策</FooterLink>
        <FooterLink $ml={25}>使用条款</FooterLink>
      </Footer>

      <Taskbar>
        <TaskSlot><Windows /></TaskSlot>
        <TaskSlot><Stroke w={22} h={24} d="M13.500 1.500a7.500 7.500 0 1 0 .01 0zM9 15 2 23" color="#fff" sw={1.500} /></TaskSlot>
        <TaskSlot><Stroke w={22} h={26} d="M1 1v5h13V1M1 25v-5h13v5M1 9h13v8H1zM20 1v7M20 13v12M18 10h4v2h-4z" color="#fff" sw={1.200} /></TaskSlot>
        <AppList>
          {APPS.map((a, i) => <AppSlot key={i} $active={a.active} $open={a.open}>{a.icon}</AppSlot>)}
        </AppList>
        <Tray>
          <TraySlot $w={40}><Stroke w={26} h={24} d="M8 10a4 4 0 1 0 .01 0zM1 23c0-4 3-7 7-7s7 3 7 7M17 2a4 4 0 1 0 .01 0zM13 13c1-3 3-4 4-4 4 0 7 3 7 7" color="#fff" sw={1.300} /></TraySlot>
          <TraySlot $w={30} $ml={10}><Stroke w={16} h={10} d="M1 9l7-7 7 7" color="#fff" sw={1.200} /></TraySlot>
          <TraySlot $w={30}>
            <svg width="20" height="14" viewBox="0 0 20 14"><path d="M5 3h14v9H5zM1 5h3v3H1z" fill="none" stroke="#fff" strokeWidth="1.200" /><rect x="8" y="5" width="9" height="5" fill="#fff" /></svg>
          </TraySlot>
          <TraySlot $w={30} $ml={1}><Stroke w={22} h={22} d="M1 5h20v12H1zM11 17v4M6 21h10M2 1h4v8H2z" color="#fff" sw={1.200} /></TraySlot>
          <TraySlot $w={30}><Stroke w={20} h={20} d="M1 7h3l4-4v14l-4-4H1zM11 7c1 2 1 4 0 6M14 5c2 3 2 7 0 10M17 3c3 4 3 10 0 14" color="#fff" sw={1.100} /></TraySlot>
          <TraySlot $w={30} $ml={6}><ImeBall /></TraySlot>
          <Clock>9:24 AM<br />11/2/2020</Clock>
          <TraySlot $w={40} $ml={13}><Stroke w={22} h={22} d="M1 1h20v16h-7l-3 3-3-3H1z" color="#fff" sw={1.200} /></TraySlot>
        </Tray>
      </Taskbar>
    </Page>
  );
}
